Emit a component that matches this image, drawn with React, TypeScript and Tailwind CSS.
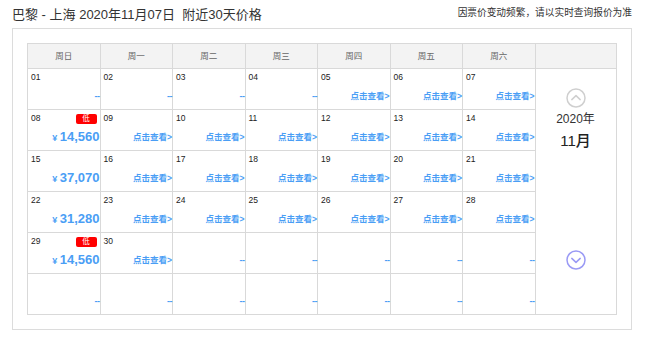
import { Fragment } from "react"

type Cell = {
  day?: string
  low?: boolean
  price?: string
  view?: boolean
}

const WEEK = ["周日", "周一", "周二", "周三", "周四", "周五", "周六"]

const ROWS: Cell[][] = [
  [
    { day: "01" },
    { day: "02" },
    { day: "03" },
    { day: "04" },
    { day: "05", view: true },
    { day: "06", view: true },
    { day: "07", view: true },
  ],
  [
    { day: "08", low: true, price: "14,560" },
    { day: "09", view: true },
    { day: "10", view: true },
    { day: "11", view: true },
    { day: "12", view: true },
    { day: "13", view: true },
    { day: "14", view: true },
  ],
  [
    { day: "15", price: "37,070" },
    { day: "16", view: true },
    { day: "17", view: true },
    { day: "18", view: true },
    { day: "19", view: true },
    { day: "20", view: true },
    { day: "21", view: true },
  ],
  [
    { day: "22", price: "31,280" },
    { day: "23", view: true },
    { day: "24", view: true },
    { day: "25", view: true },
    { day: "26", view: true },
    { day: "27", view: true },
    { day: "28", view: true },
  ],
  [
    { day: "29", low: true, price: "14,560" },
    { day: "30", view: true },
    {},
    {},
    {},
    {},
    {},
  ],
  [{}, {}, {}, {}, {}, {}, {}],
]

function DayCell({ cell }: { cell: Cell }) {
  return (
    <div className="flex flex-col border-b border-r border-[#d9d9d9] bg-white pl-[3px]">
      <div className="mt-[2px] flex h-[13px] items-center justify-between">
        <span className="text-[8.5px] leading-[13px] text-[#222]">{cell.day ?? ""}</span>
        {cell.low && (
          <span className="mr-[3px] flex h-[10px] w-[21px] items-center justify-center rounded-[2px] bg-[#ff0000] text-[7.5px] leading-none text-white">
            低
          </span>
        )}
      </div>
      <div className="mt-[5px] flex h-[14px] items-center justify-end leading-[14px] text-[#4a9ef5]">
        {cell.price ? (
          <span className="font-bold">
            <span className="text-[9px]">¥ </span>
            <span className="text-[13px]">{cell.price}</span>
          </span>
        ) : cell.view ? (
          <span className="text-[8.5px] font-bold">点击查看&gt;</span>
        ) : (
          <span className="text-[9px] font-bold tracking-[-0.5px]">--</span>
        )}
      </div>
    </div>
  )
}

function CircleArrow({ up, color }: { up: boolean; color: string }) {
  return (
    <svg width="20" height="20" viewBox="0 0 20 20" fill="none" stroke={color} strokeWidth="1.5" strokeLinecap="round" strokeLinejoin="round">
      <circle cx="10" cy="10" r="9" />
      {up ? <path d="M5.8 11.6 L10 7.6 L14.2 11.6" /> : <path d="M5.8 8.4 L10 12.4 L14.2 8.4" />}
    </svg>
  )
}

export default function App() {
  return (
    <div className="h-[343px] w-[650px] bg-white pl-[12px] pr-[18px] font-['Liberation_Sans','Noto_Sans_CJK_SC',sans-serif] text-[#333]">
      <div className="flex h-[28px] items-center justify-between">
        <h1 className="text-[13px] font-normal leading-none">
          巴黎 - 上海 2020年11月07日&nbsp;&nbsp;附近30天价格
        </h1>
        <p className="pb-[3px] text-[9.7px] leading-none">因票价变动频繁，请以实时查询报价为准</p>
      </div>
      <div className="w-[620px] border border-[#dcdcdc] pb-[14px] pl-[14px] pt-[14px]">
        <div className="grid w-[590px] grid-cols-[repeat(7,72.5px)_81px] grid-rows-[25px_repeat(6,41px)] border-l border-t border-[#d9d9d9]">
          {WEEK.map((w) => (
            <div
              key={w}
              className="flex items-center justify-center border-b border-r border-[#d9d9d9] bg-[#f3f3f3] text-[8.5px] text-[#666]"
            >
              {w}
            </div>
          ))}
          <div className="border-b border-r border-[#d9d9d9] bg-[#f3f3f3]" />
          {ROWS.map((row, r) => (
            <Fragment key={r}>
              {row.map((cell, c) => (
                <DayCell key={c} cell={cell} />
              ))}
              {r === 0 && (
                <div className="row-span-6 flex flex-col items-center border-b border-r border-[#d9d9d9] bg-white pt-[19px]">
                  <CircleArrow up color="#cfcfcf" />
                  <div className="mt-[3px] text-[12px] leading-[16px] text-[#333]">2020年</div>
                  <div className="mt-[4px] text-[15px] font-medium leading-[20px] text-[#222]">11月</div>
                  <div className="mt-[99px]">
                    <CircleArrow up={false} color="#9a9af5" />
                  </div>
                </div>
              )}
            </Fragment>
          ))}
        </div>
      </div>
    </div>
  )
}
